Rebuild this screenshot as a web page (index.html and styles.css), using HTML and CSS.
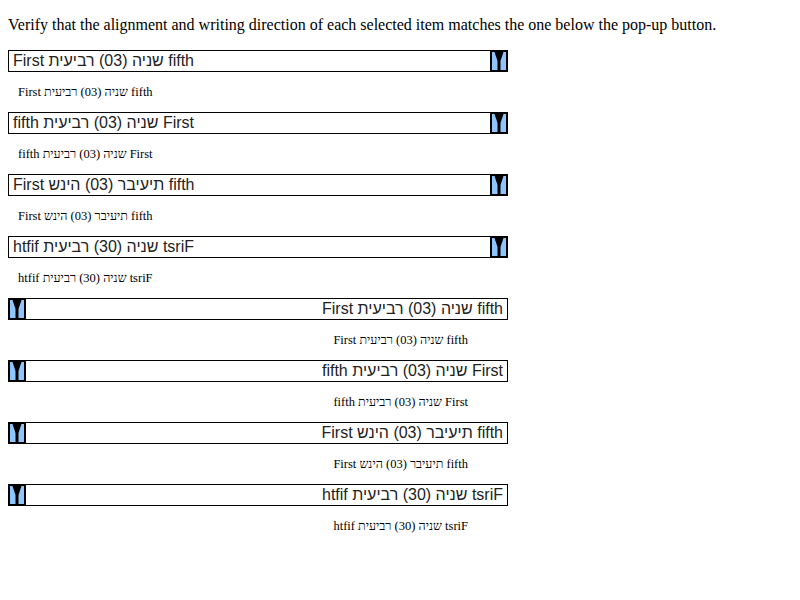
FILE: index.html
```html
<!DOCTYPE html>
<html>
<head>
<meta charset="utf-8">
<link rel="stylesheet" href="styles.css">
</head>
<body>
<p class="intro">Verify that the alignment and writing direction of each selected item matches the one below the pop-up button.</p>

<div class="sel">
  <span class="val t-ltr">First שניה (03) רביעית fifth</span>
  <svg class="arrow" viewBox="0 0 18 22" width="18" height="22"><rect width="18" height="22" fill="#000"/><rect x="2" y="2" width="14" height="18" fill="#8ec6fc"/><path d="M4.5 2H13.5L10.5 11V20H7.5V11Z" fill="#000"/></svg>
</div>
<div class="lbl t-ltr">First שניה (03) רביעית fifth</div>

<div class="sel">
  <span class="val t-rtl">First שניה (03) רביעית fifth</span>
  <svg class="arrow" viewBox="0 0 18 22" width="18" height="22"><rect width="18" height="22" fill="#000"/><rect x="2" y="2" width="14" height="18" fill="#8ec6fc"/><path d="M4.5 2H13.5L10.5 11V20H7.5V11Z" fill="#000"/></svg>
</div>
<div class="lbl t-rtl">First שניה (03) רביעית fifth</div>

<div class="sel">
  <span class="val t-lo">First שניה (03) רביעית fifth</span>
  <svg class="arrow" viewBox="0 0 18 22" width="18" height="22"><rect width="18" height="22" fill="#000"/><rect x="2" y="2" width="14" height="18" fill="#8ec6fc"/><path d="M4.5 2H13.5L10.5 11V20H7.5V11Z" fill="#000"/></svg>
</div>
<div class="lbl t-lo">First שניה (03) רביעית fifth</div>

<div class="sel">
  <span class="val t-ro">First שניה (03) רביעית fifth</span>
  <svg class="arrow" viewBox="0 0 18 22" width="18" height="22"><rect width="18" height="22" fill="#000"/><rect x="2" y="2" width="14" height="18" fill="#8ec6fc"/><path d="M4.5 2H13.5L10.5 11V20H7.5V11Z" fill="#000"/></svg>
</div>
<div class="lbl t-ro">First שניה (03) רביעית fifth</div>

<div class="sel sel-rtl">
  <span class="val t-ltr">First שניה (03) רביעית fifth</span>
  <svg class="arrow" viewBox="0 0 18 22" width="18" height="22"><rect width="18" height="22" fill="#000"/><rect x="2" y="2" width="14" height="18" fill="#8ec6fc"/><path d="M4.5 2H13.5L10.5 11V20H7.5V11Z" fill="#000"/></svg>
</div>
<div class="lbl lbl-rtl t-ltr">First שניה (03) רביעית fifth</div>

<div class="sel sel-rtl">
  <span class="val t-rtl">First שניה (03) רביעית fifth</span>
  <svg class="arrow" viewBox="0 0 18 22" width="18" height="22"><rect width="18" height="22" fill="#000"/><rect x="2" y="2" width="14" height="18" fill="#8ec6fc"/><path d="M4.5 2H13.5L10.5 11V20H7.5V11Z" fill="#000"/></svg>
</div>
<div class="lbl lbl-rtl t-rtl">First שניה (03) רביעית fifth</div>

<div class="sel sel-rtl">
  <span class="val t-lo">First שניה (03) רביעית fifth</span>
  <svg class="arrow" viewBox="0 0 18 22" width="18" height="22"><rect width="18" height="22" fill="#000"/><rect x="2" y="2" width="14" height="18" fill="#8ec6fc"/><path d="M4.5 2H13.5L10.5 11V20H7.5V11Z" fill="#000"/></svg>
</div>
<div class="lbl lbl-rtl t-lo">First שניה (03) רביעית fifth</div>

<div class="sel sel-rtl">
  <span class="val t-ro">First שניה (03) רביעית fifth</span>
  <svg class="arrow" viewBox="0 0 18 22" width="18" height="22"><rect width="18" height="22" fill="#000"/><rect x="2" y="2" width="14" height="18" fill="#8ec6fc"/><path d="M4.5 2H13.5L10.5 11V20H7.5V11Z" fill="#000"/></svg>
</div>
<div class="lbl lbl-rtl t-ro">First שניה (03) רביעית fifth</div>
</body>
</html>
```

FILE: styles.css
```css
html { background: #fff; }
body {
  margin: 8px;
  font-family: "Liberation Serif", "DejaVu Serif", serif;
  font-size: 16px;
  color: #000;
}
.intro {
  margin: 8px 0 16px;
  line-height: 18px;
}
.sel {
  box-sizing: border-box;
  width: 500px;
  height: 22px;
  border: 1px solid #000;
  display: flex;
  flex-direction: row;
  align-items: stretch;
  font-family: "Liberation Sans", Arial, sans-serif;
  font-size: 16px;
  color: #222;
  background: #fff;
}
.sel-rtl { flex-direction: row-reverse; }
.val {
  flex: 1;
  min-width: 0;
  line-height: 19px;
  padding: 0 4px;
  white-space: nowrap;
  overflow: hidden;
  text-align: left;
}
.sel-rtl .val { text-align: right; }
.arrow {
  display: block;
  flex: none;
  width: 18px;
  height: 22px;
  margin: -1px -1px -1px 0;
}
.sel-rtl .arrow { margin: -1px 0 -1px -1px; }
.lbl {
  width: 450px;
  padding: 10px 10px;
  line-height: 20px;
  font-size: 12.5px;
  text-align: left;
  white-space: nowrap;
}
.lbl-rtl { text-align: right; }
.t-ltr { direction: ltr; unicode-bidi: isolate; }
.t-rtl { direction: rtl; unicode-bidi: isolate; }
.t-lo { direction: ltr; unicode-bidi: bidi-override; }
.t-ro { direction: rtl; unicode-bidi: bidi-override; }
```
